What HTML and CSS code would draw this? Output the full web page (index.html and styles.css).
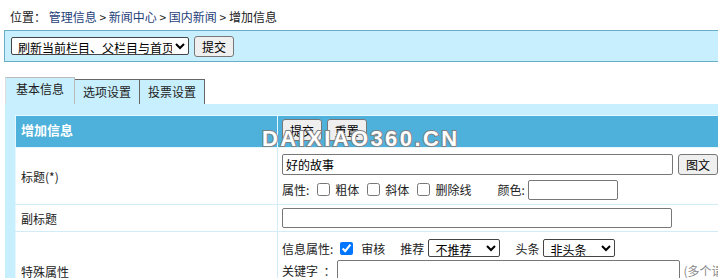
FILE: index.html
```html
<!DOCTYPE html>
<html lang="zh-CN">
<head>
	<meta charset="UTF-8">
	<title>增加信息</title>
	<link rel="stylesheet" href="styles.css">
</head>
<body>
	<div class="crumb">
		位置：&nbsp;<a href="#">管理信息</a> &gt; <a href="#">新闻中心</a> &gt; <a href="#">国内新闻</a> &gt; 增加信息
	</div>

	<div class="bar">
		<select class="refresh">
			<option>刷新当前栏目、父栏目与首页</option>
		</select>
		<button class="btn">提交</button>
	</div>

	<div class="tabs">
		<div class="tab active">基本信息</div>
		<div class="tab">选项设置</div>
		<div class="tab">投票设置</div>
	</div>

	<div class="panel">
		<div class="watermark">DAIXIAO360.CN</div>
		<table class="form">
			<colgroup>
				<col class="col-label">
				<col>
			</colgroup>
			<tr class="head">
				<td class="label">增加信息</td>
				<td>
					<button class="btn">提交</button>
					<button class="btn">重置</button>
				</td>
			</tr>
			<tr class="row-title">
				<td class="label">标题(*)</td>
				<td>
					<div class="line">
						<input type="text" class="title-input" value="好的故事">
						<button class="btn">图文</button>
					</div>
					<div class="line second">
						属性:
						<label><input type="checkbox"> 粗体</label>
						<label><input type="checkbox"> 斜体</label>
						<label><input type="checkbox"> 删除线</label>
						<span class="color-label">颜色:</span>
						<input type="text" class="color-input">
					</div>
				</td>
			</tr>
			<tr class="row-sub">
				<td class="label">副标题</td>
				<td><input type="text" class="sub-input"></td>
			</tr>
			<tr class="row-special">
				<td class="label">特殊属性</td>
				<td>
					<div class="line">
						信息属性:
						<label class="check-on"><input type="checkbox" checked> 审核</label>
						<span class="gap">推荐</span>
						<select class="small-select"><option>不推荐</option></select>
						<span class="gap">头条</span>
						<select class="small-select"><option>非头条</option></select>
					</div>
					<div class="line">
						关键字&nbsp;&nbsp;：
						<input type="text" class="key-input">
						<span class="hint">(多个请用半角逗号隔开)</span>
					</div>
				</td>
			</tr>
		</table>
	</div>
</body>
</html>
```

FILE: styles.css
```css
body{
	margin: 0;
	font-family: "Noto Sans CJK SC", sans-serif;
	font-size: 12px;
	color: #222;
	overflow: hidden;
}

a{
	color: #1f3f7a;
	text-decoration: none;
}

.crumb{
	height: 30px;
	line-height: 34px;
	padding-left: 10px;
	white-space: nowrap;
}

.bar{
	margin-left: 4px;
	height: 30px;
	display: flex;
	align-items: center;
	gap: 5px;
	padding-left: 6px;
	background: #c7effe;
	border: 1px solid #69adc6;
	border-right: none;
}

select,
input,
button{
	font-family: "Noto Sans CJK SC", sans-serif;
	font-size: 12px;
	color: #000;
	box-sizing: border-box;
	flex-shrink: 0;
}

select{
	height: 18px;
	padding: 0 0 0 2px;
	border: 1px solid #444;
	border-radius: 2px;
	background: #fff;
}

.refresh{
	width: 178px;
}

.btn{
	height: 21px;
	padding: 0 7px;
	border: 1px solid #777;
	border-radius: 3px;
	background: #efefef;
}

.tabs{
	display: flex;
	align-items: flex-end;
	margin: 15px 0 0 5px;
	height: 27px;
}

.tab{
	height: 24px;
	line-height: 24px;
	padding: 0 8px;
	border: 1px solid #666;
	border-bottom: none;
	border-left: none;
	background: #c7effe;
}

.tab.active{
	height: 26px;
	line-height: 22px;
	padding: 0 10px;
	border-color: #bbb;
	border-left: 1px solid #ddd;
}

.panel{
	position: relative;
	margin-left: 5px;
	padding: 11px 0 0 10px;
	background: #c7effe;
	height: 200px;
}

/* watermark over the header row */
.watermark{
	position: absolute;
	left: 257px;
	top: 23px;
	line-height: 24px;
	font-family: "Liberation Sans", sans-serif;
	font-weight: bold;
	font-size: 22px;
	letter-spacing: 2.4px;
	color: #fff;
	-webkit-text-stroke: 2px #808080;
	paint-order: stroke fill;
	pointer-events: none;
	z-index: 1;
}

.form{
	width: 730px;
	table-layout: fixed;
	border-collapse: collapse;
	background: #fff;
	border: 1px solid #e6f8ff;
}

.col-label{
	width: 262px;
}

.form td{
	padding: 0 4px;
	border-bottom: 1px solid #d3edf8;
	vertical-align: middle;
	white-space: nowrap;
	overflow: hidden;
}

.form td.label{
	padding-left: 5px;
	border-right: 1px solid #d3edf8;
}

.form tr.head td{
	height: 28px;
	background: #4eb1db;
	border-bottom: 1px solid #e6f8ff;
	padding-top: 3px;
	vertical-align: top;
}

.form tr.head td.label{
	color: #fff;
	font-weight: bold;
	font-size: 13px;
	line-height: 26px;
	padding-top: 1px;
	border-right: 1px solid #e6f8ff;
}

.form tr.head .btn{
	height: 22px;
	margin-right: 2px;
}

.row-title td{
	padding-top: 5px;
	padding-bottom: 4px;
}

.row-sub td{
	height: 26px;
}

.row-special td{
	padding-top: 5px;
	vertical-align: top;
}

.row-special td.label{
	padding-top: 31px;
}

.line{
	display: flex;
	align-items: center;
	white-space: nowrap;
	height: 22px;
}

.line.second{
	margin-top: 4px;
	height: 21px;
}

.line label{
	display: flex;
	align-items: center;
	margin-left: 8px;
}

.line label.check-on{
	margin-left: 7px;
}

input[type=text]{
	height: 20px;
	padding: 0 3px;
	border: 1px solid #777;
	border-radius: 2px;
}

input[type=checkbox]{
	width: 13px;
	height: 13px;
	margin: 0 5px 0 0;
}

.check-on input[type=checkbox]{
	margin-right: 8px;
}

.title-input{
	width: 391px;
	height: 21px !important;
	margin-right: 5px;
}

.color-label{
	margin-left: 26px;
	margin-right: 3px;
}

.color-input{
	width: 90px;
}

.sub-input{
	width: 390px;
}

.gap{
	margin: 0 4px 0 15px;
}

.small-select{
	width: 72px;
}

.key-input{
	width: 343px;
	margin-left: 2px;
}

.hint{
	color: #888;
	margin-left: 3px;
}
```
